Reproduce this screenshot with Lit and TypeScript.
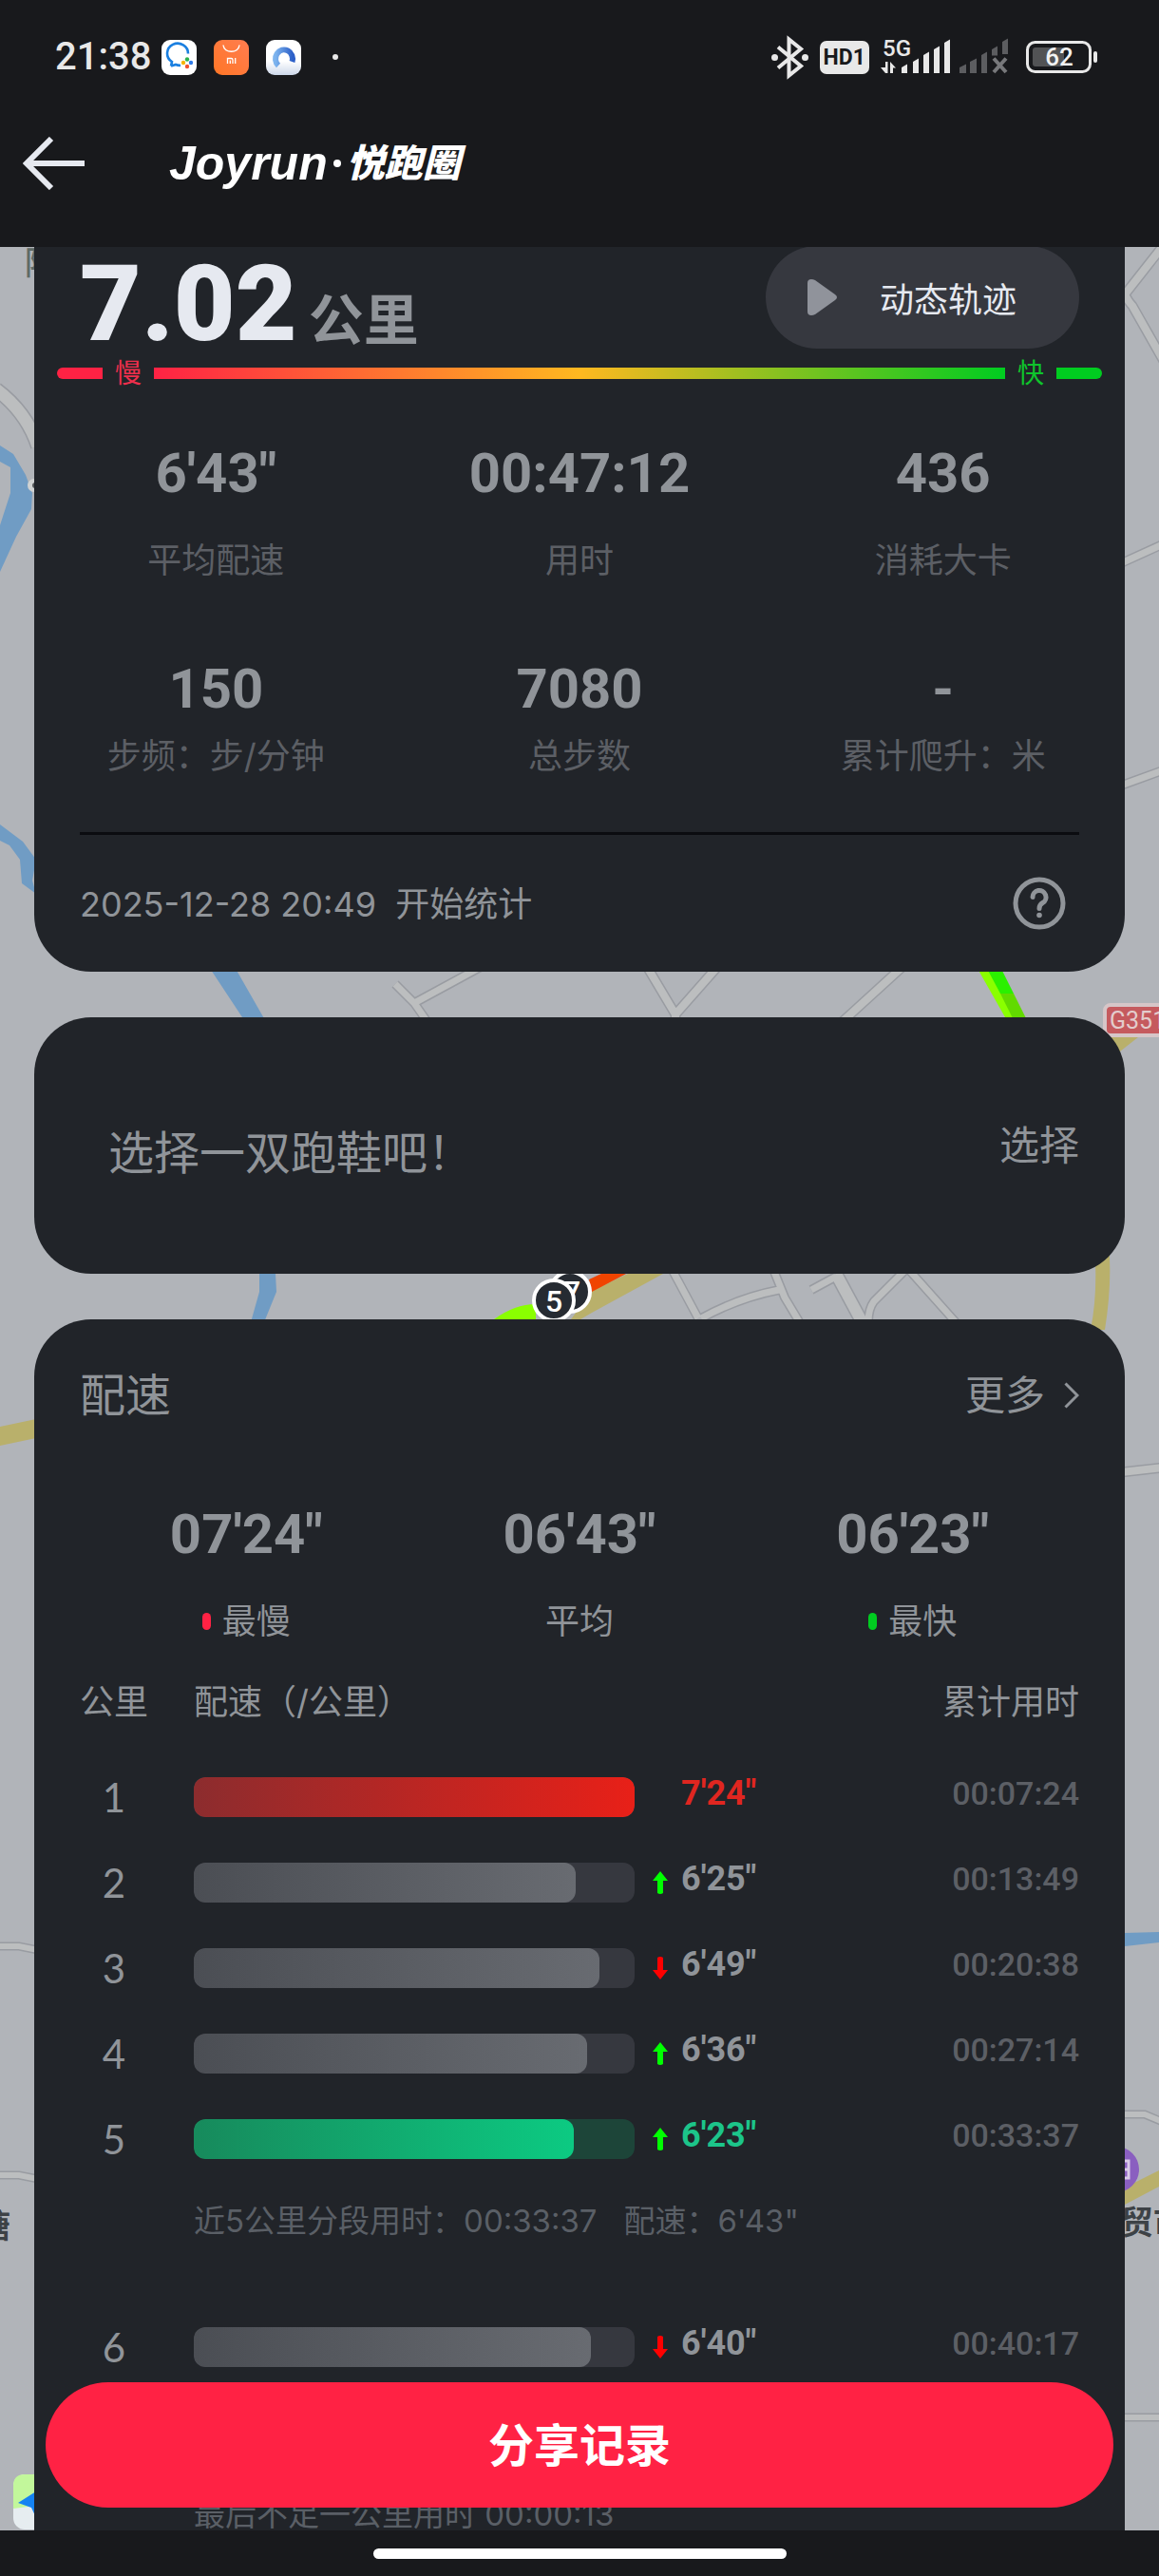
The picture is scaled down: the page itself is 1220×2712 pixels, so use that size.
import { LitElement, html, svg, css, nothing } from 'lit';
import { customElement, property } from 'lit/decorators.js';
import { classMap } from 'lit/directives/class-map.js';

interface Split {
  km: number;
  seconds: number;
  total: string;
  trend?: 'up' | 'down';
  mark?: 'slowest' | 'fastest';
  note?: string;
}

const SPLITS: Split[] = [
  { km: 1, seconds: 444, total: '00:07:24', mark: 'slowest' },
  { km: 2, seconds: 385, total: '00:13:49', trend: 'up' },
  { km: 3, seconds: 409, total: '00:20:38', trend: 'down' },
  { km: 4, seconds: 396, total: '00:27:14', trend: 'up' },
  {
    km: 5,
    seconds: 383,
    total: '00:33:37',
    trend: 'up',
    mark: 'fastest',
    note: '近5公里分段用时：00:33:37   配速：6\'43"',
  },
  { km: 6, seconds: 400, total: '00:40:17', trend: 'down' },
];

const STATS = [
  { value: '6\'43"', label: '平均配速' },
  { value: '00:47:12', label: '用时' },
  { value: '436', label: '消耗大卡' },
];

const STATS_MORE = [
  { value: '150', label: '步频：步/分钟' },
  { value: '7080', label: '总步数' },
  { value: '-', label: '累计爬升：米' },
];

const PACES = [
  { value: '07\'24"', label: '最慢', dot: 'slow' },
  { value: '06\'43"', label: '平均', dot: '' },
  { value: '06\'23"', label: '最快', dot: 'fast' },
];

const slowest = Math.max(...SPLITS.map((s) => s.seconds));

const formatPace = (seconds: number) =>
  `${Math.floor(seconds / 60)}'${String(seconds % 60).padStart(2, '0')}"`;

@customElement('status-bar')
export class StatusBar extends LitElement {
  static styles = css`
    :host {
      display: flex;
      align-items: center;
      justify-content: space-between;
      height: 120px;
      padding: 0 64px 0 58px;
      color: #e8e8e8;
      font-family: Roboto, 'Noto Sans', sans-serif;
    }
    .left,
    .right {
      display: flex;
      align-items: center;
    }
    .left {
      gap: 18px;
    }
    .right {
      gap: 12px;
    }
    time {
      width: 94px;
      font-size: 40px;
      font-weight: 500;
      line-height: 48px;
      white-space: nowrap;
    }
    .dot {
      width: 6px;
      height: 6px;
      margin-left: 15px;
      border-radius: 50%;
      background: #e8e8e8;
    }
    .hd {
      padding: 0 4px;
      border-radius: 7px;
      background: #e8e8e8;
      color: #18191c;
      font-size: 23px;
      font-weight: 700;
      line-height: 35px;
    }
    svg {
      display: block;
      overflow: visible;
    }
    .battery {
      margin-left: 7px;
    }
    svg text {
      font-family: Roboto, 'Noto Sans', sans-serif;
    }
  `;

  render() {
    return html`
      <div class="left">
        <time>21:38</time>
        <svg width="37" height="37" viewBox="0 0 37 37">
          <rect width="37" height="37" rx="9" fill="#fff" />
          <path
            d="M10 27.5l1-4.5a11 10.500 0 1 1 17-8.500M10 27.500l5-1.500a11 11 0 0 0 5 .8"
            fill="none"
            stroke="#1a7fe0"
            stroke-width="2.600"
          />
          <circle cx="27" cy="20.500" r="2.200" fill="#2bb24c" />
          <circle cx="23" cy="24" r="2.200" fill="#f5b400" />
          <circle cx="31" cy="24" r="2.200" fill="#2f7be8" />
          <circle cx="27" cy="28" r="2.200" fill="#f0502e" />
        </svg>
        <svg width="37" height="37" viewBox="0 0 37 37">
          <defs>
            <linearGradient id="mi" x1="0" y1="1" x2="1" y2="0">
              <stop offset="0" stop-color="#ff7626" />
              <stop offset="1" stop-color="#ff7d50" />
            </linearGradient>
          </defs>
          <rect width="37" height="37" rx="9" fill="url(#mi)" />
          <path d="M10 5.500c1 9 16 9 17 0" fill="none" stroke="#fff" stroke-width="1.500" />
          <path
            d="M14.500 25v-5.500h4a1.500 1.500 0 0 1 1.500 1.500v4M17.300 21.500v3.500M22.700 19v6"
            fill="none"
            stroke="#fff"
            stroke-width="1.300"
          />
        </svg>
        <svg width="37" height="37" viewBox="0 0 37 37">
          <defs>
            <linearGradient id="sky" x1="0" y1="0" x2="0" y2="1">
              <stop offset=".6" stop-color="#fff" />
              <stop offset="1" stop-color="#cdd8ea" />
            </linearGradient>
            <linearGradient id="ring" x1="0" y1="0" x2="1" y2="0">
              <stop offset="0" stop-color="#7db4ee" />
              <stop offset="1" stop-color="#2c5fc8" />
            </linearGradient>
          </defs>
          <rect width="37" height="37" rx="9" fill="url(#sky)" />
          <path
            d="M13 27a9 9.500 0 1 1 14.500-4"
            fill="none"
            stroke="url(#ring)"
            stroke-width="6"
          />
        </svg>
        <span class="dot"></span>
      </div>
      <div class="right">
        <svg width="39" height="43" viewBox="0 0 39 43" fill="none" stroke="#e8e8e8">
          <path d="M7 10.500L31 30.500L18.500 40.500V2.500L31 12.500L7 32.500" stroke-width="4" />
          <circle cx="3.500" cy="21.500" r="3.500" fill="#e8e8e8" stroke="none" />
          <circle cx="35.500" cy="21.500" r="3.500" fill="#e8e8e8" stroke="none" />
        </svg>
        <span class="hd">HD1</span>
        <svg width="134" height="38" viewBox="0 0 134 38" fill="#e8e8e8">
          <text x="2" y="18" font-size="24" font-weight="500">5G</text>
          <path d="M5 24h2.500v12H5l-5-6h5zM10 36V24l6 6.500h-3V36z" />
          <path
            d="M22 30l6-3.500v9.500h-6zM34 24l6-3.500V36h-6zM45 17l6-3.500V36h-6zM56 11l6-3.500V36h-6zM67 4l6-3.500V36h-6z"
          />
          <path
            fill="#5c5d60"
            d="M83 30l7-3.500v9.500h-7zM94 24l7-3.500V36h-7zM106 17l6-3.500V36h-6zM117 11l6-3.500v10h-6zM128 3l6-3.500V16h-6z"
          />
          <path d="M119 20.500l13 14.500M132 20.500l-13 14.500" stroke="#77787b" stroke-width="4" />
        </svg>
        <svg class="battery" width="76" height="35" viewBox="0 0 76 35">
          <rect x="1.500" y="1.500" width="66" height="31" rx="8" fill="none" stroke="#e8e8e8" stroke-width="3" />
          <rect x="7" y="7" width="33" height="20" rx="3" fill="#525355" />
          <rect x="71" y="11" width="4" height="12" rx="2" fill="#e8e8e8" />
          <text x="35" y="26" text-anchor="middle" font-size="26" font-weight="500" fill="#f2f2f2">62</text>
        </svg>
      </div>
    `;
  }
}

@customElement('route-map')
export class RouteMap extends LitElement {
  static styles = css`
    :host {
      display: block;
    }
    svg {
      display: block;
      width: 100%;
      height: 100%;
    }
    .edge {
      fill: none;
      stroke: #999ca2;
    }
    .road {
      fill: none;
      stroke: #bcbebf;
    }
    .water {
      fill: #709cc4;
    }
    .main {
      fill: #b9b06b;
    }
    text {
      font-family: 'Noto Sans', 'Noto Sans CJK SC', sans-serif;
      font-weight: 700;
      font-size: 34px;
      fill: #3d4246;
    }
    .district {
      font-weight: 500;
      fill: #5f6a66;
    }
    .shield {
      font-family: Roboto, sans-serif;
      font-weight: 400;
      font-size: 25px;
      fill: #e3cccc;
    }
    .marker {
      font-family: Roboto, sans-serif;
      font-weight: 500;
      font-size: 32px;
      fill: #fff;
      text-anchor: middle;
    }
  `;

  // Every road is stroked twice: a darker casing first, the surface over it.
  private roads = [
    { d: 'M-4 410Q28 434 40 470', w: 13 },
    { d: 'M416 1036l20 20 14 20M436 1056l70-38', w: 7 },
    { d: 'M680 1016l31 52 44-50M711 1068v8M952 1016l-68 62', w: 8 },
    { d: 'M1228 254l-44 56q4 8 8 12l34 60', w: 8 },
    { d: 'M1180 593l44-20M1180 827l44-16', w: 7 },
    { d: 'M706 1334l29 54M738 1388q40-22 82-30M813 1334l13 32 18 30', w: 7 },
    { d: 'M854 1358l26-14M954 1336l-34 34q-6 8-6 22M956 1336l50 56', w: 7 },
    { d: 'M880 1341l28 52', w: 12 },
    { d: 'M1180 1550l44-5', w: 8 },
    { d: 'M-4 2049h24l20 4M-4 2290h24l20 4', w: 6 },
    { d: 'M1180 2226h25l19 8M1180 2545h44', w: 6 },
  ];

  render() {
    return html`
      <svg viewBox="0 260 1220 2404" preserveAspectRatio="xMidYMin slice" aria-hidden="true">
        <rect y="260" width="1220" height="2404" fill="#b1b4b9" />
        ${this.roads.map((r) => svg`<path class="edge" d=${r.d} stroke-width=${r.w + 3} />`)}
        ${this.roads.map((r) => svg`<path class="road" d=${r.d} stroke-width=${r.w} />`)}
        <path
          class="water"
          d="M0 469l14 9 13 22 7 19-1 17-16 29-17 37v-49l11-34v-27l-11-6zM0 868l24 18 14 19-4 22 4 14-15-11-2-25-11-15-10-5zM220 1018h27l32 56h-22zM273 1341h17l1 19-13 32h-14l9-32zM1184 2035l36-1v11l-36 4z"
        />
        <circle cx="36" cy="511" r="7" fill="#d0d2d2" />
        <circle cx="37" cy="511" r="3" fill="#55585a" />
        <path
          class="main"
          d="M0 1502l38-8v20l-38 8zM661 1341h37l-75 41-12 7h-10l22-30zM1152 1310q4 50-4 90h15q8-50 4-90zM1184 2303l36-18v17l-36 19zM1170 1114l28-22h-28z"
        />
        <path fill="#8aff00" d="M1028 1018h12l40 60h-18zM520 1389q22-16 44-16v16z" />
        <path fill="#2bf000" d="M1038 1018h15l14 28h-14z" />
        <path fill="#62da00" d="M1053 1046h14l14 28h-14z" />
        <path fill="#f04400" d="M620 1347l15-7h26l-38 20z" />
        <circle cx="600" cy="1360" r="21" fill="#262b32" stroke="#fff" stroke-width="4" />
        <text class="marker" x="602" y="1371">7</text>
        <circle cx="583" cy="1369" r="21" fill="#262b32" stroke="#fff" stroke-width="4" />
        <text class="marker" x="583" y="1381">5</text>
        <rect x="1163" y="1058" width="90" height="32" rx="6" fill="#c55a5e" stroke="#d6c6c8" stroke-width="4" />
        <text class="shield" x="1168" y="1083">G351</text>
        <text class="district" x="26" y="289">陈</text>
        <text x="11" y="2356" text-anchor="end">塘</text>
        <text x="1180" y="2352">贸市</text>
        <circle cx="1175" cy="2284" r="24" fill="#8a5fc0" />
        <path d="M1184 2275h4v18h-4M1184 2284h4" fill="none" stroke="#d9cbe8" stroke-width="3" />
        <rect x="14" y="2605" width="60" height="58" rx="12" fill="#e6edf0" />
        <path fill="#c2f79b" d="M14 2641v-24q0-12 12-12h20v32z" />
        <path fill="#1583f2" d="M19 2635l22-14v36l-8-17z" />
      </svg>
    `;
  }
}

@customElement('pace-table')
export class PaceTable extends LitElement {
  @property({ attribute: false }) splits: Split[] = [];

  static styles = css`
    :host {
      display: block;
    }
    table,
    thead,
    tbody {
      display: block;
    }
    tr {
      display: grid;
      grid-template-columns: 72px minmax(0, 512fr) 150px minmax(0, 318fr);
      align-items: center;
      height: 90px;
    }
    thead tr {
      height: 110px;
    }
    th,
    td {
      padding: 0;
      font-weight: 400;
      text-align: left;
    }
    th {
      color: #909499;
      font-size: 36px;
      line-height: 40px;
    }
    .wide {
      grid-column: span 2;
    }
    .wide,
    .bar {
      padding-left: 48px;
    }
    thead th:last-child,
    .total {
      text-align: right;
    }
    .km {
      color: #909499;
      font-family: Lato, 'Noto Sans', sans-serif;
      font-size: 42px;
      text-align: center;
    }
    .track {
      height: 42px;
      border-radius: 12px;
      background: #36383f;
      overflow: hidden;
    }
    .fill {
      height: 100%;
      border-radius: 12px;
      background: linear-gradient(90deg, #4b4e54, #686b71);
    }
    .slowest .fill {
      background: linear-gradient(90deg, #8c2c2e, #e82018);
    }
    .fastest .track {
      background: #1d4539;
    }
    .fastest .fill {
      background: linear-gradient(90deg, #178a5c, #0cca82);
    }
    .pace,
    .total {
      font-family: Roboto, 'Noto Sans', sans-serif;
      font-size: 34px;
      line-height: 44px;
      padding-bottom: 8px;
    }
    .pace {
      display: grid;
      grid-template-columns: 16px 1fr;
      align-items: center;
      gap: 14px;
      padding-left: 19px;
      color: #909499;
      font-size: 36px;
      font-weight: 700;
    }
    .pace svg {
      margin-top: 8px;
    }
    .pace span {
      grid-column: 2;
    }
    .slowest .pace {
      color: #e02620;
    }
    .fastest .pace {
      color: #1cc58a;
    }
    .total {
      color: #5c5f65;
      font-weight: 500;
    }
    .note {
      display: block;
      height: 129px;
    }
    .note td {
      display: block;
      padding: 21px 0 0 120px;
      color: #5a5f66;
      font-size: 33px;
      line-height: 40px;
      white-space: pre;
    }
    .last {
      padding-top: 90px;
    }
  `;

  private arrow(trend: Split['trend']) {
    if (!trend) return nothing;
    return html`
      <svg width="16" height="24" viewBox="0 0 16 24" aria-hidden="true">
        ${trend === 'up'
          ? svg`<path d="M8 0l8 10h-5v13q-3 2-6 0V10H0z" fill="#00ff00" />`
          : svg`<path d="M8 24l8-10h-5V1Q8-1 5 1v13H0z" fill="#ff0000" />`}
      </svg>
    `;
  }

  private row(split: Split) {
    const width = ((split.seconds / slowest) * 100).toFixed(1);
    return html`
      <tr class=${classMap({ slowest: split.mark === 'slowest', fastest: split.mark === 'fastest' })}>
        <td class="km">${split.km}</td>
        <td class="bar">
          <div class="track"><div class="fill" style="width: ${width}%"></div></div>
        </td>
        <td class="pace">${this.arrow(split.trend)}<span>${formatPace(split.seconds)}</span></td>
        <td class="total">${split.total}</td>
      </tr>
      ${split.note ? html`<tr class="note"><td colspan="4">${split.note}</td></tr>` : nothing}
    `;
  }

  render() {
    return html`
      <table>
        <thead>
          <tr>
            <th>公里</th>
            <th class="wide">配速（/公里）</th>
            <th>累计用时</th>
          </tr>
        </thead>
        <tbody>
          ${this.splits.map((s) => this.row(s))}
          <tr class="note last"><td colspan="4">最后不足一公里用时 00:00:13</td></tr>
        </tbody>
      </table>
    `;
  }
}

@customElement('app-root')
export class AppRoot extends LitElement {
  static styles = css`
    :host {
      display: flex;
      flex-direction: column;
      height: 100vh;
      background: #18191c;
      color: #909499;
      font-family: Inter, 'Noto Sans CJK SC', sans-serif;
      overflow: hidden;
    }
    button {
      padding: 0;
      border: 0;
      background: none;
      color: inherit;
      font: inherit;
      cursor: pointer;
    }
    svg {
      display: block;
    }
    .nav {
      display: flex;
      align-items: center;
      gap: 88px;
      height: 104px;
      padding: 0 24px 36px;
    }
    .brand {
      display: flex;
      align-items: center;
      gap: 6px;
      margin: 0;
      color: #fff;
      font-family: 'Liberation Sans', 'Noto Sans CJK SC', sans-serif;
      font-size: 50px;
      font-style: italic;
      font-weight: 700;
      line-height: 60px;
    }
    .brand i {
      width: 8px;
      height: 8px;
      border-radius: 50%;
      background: #fff;
    }
    .brand span {
      font-size: 40px;
      font-weight: 900;
    }
    main {
      position: relative;
      flex: 1;
      min-height: 0;
      overflow: hidden;
    }
    route-map {
      position: absolute;
      inset: 0;
    }
    .feed {
      position: relative;
      display: flex;
      flex-direction: column;
      gap: 48px;
      padding: 0 36px;
    }
    .card {
      padding: 0 48px;
      border-radius: 60px;
      background: #212429;
    }
    .summary {
      border-radius: 0 0 60px 60px;
    }
    .hero {
      display: flex;
      align-items: flex-end;
      justify-content: space-between;
      height: 107px;
    }
    .distance {
      display: flex;
      align-items: baseline;
      gap: 12px;
      margin: 0;
      font-size: 58px;
      font-weight: 700;
      line-height: 60px;
    }
    .distance b {
      color: #e6e9f0;
      font-family: Roboto, 'Noto Sans', sans-serif;
      font-size: 112px;
      line-height: 88px;
    }
    .replay {
      display: flex;
      align-items: center;
      justify-content: space-between;
      width: 330px;
      height: 108px;
      padding: 0 66px 0 44px;
      border-radius: 54px;
      background: #36383f;
      color: #e6e9f0;
      font-size: 36px;
    }
    .scale {
      display: flex;
      align-items: center;
      gap: 13px;
      margin: 6px -24px 0;
      font-size: 28px;
      line-height: 40px;
    }
    .scale i {
      width: 48px;
      height: 12px;
    }
    .scale .start {
      border-radius: 6px 0 0 6px;
      background: #ff2244;
    }
    .scale .middle {
      flex: 1;
      background: linear-gradient(90deg, #ff2244, #ffb820 50%, #00cc20);
    }
    .scale .end {
      border-radius: 0 6px 6px 0;
      background: #00cc20;
    }
    .slow-text {
      color: #ee2f4c;
    }
    .fast-text {
      color: #0fc42c;
    }
    .stats {
      display: grid;
      grid-template-columns: repeat(3, 1fr);
      margin: 53px -48px 0;
      text-align: center;
    }
    .stats.tight {
      margin-top: 83px;
    }
    .stats div,
    .paces div {
      display: flex;
      flex-direction: column;
      gap: 40px;
    }
    .stats.tight div {
      gap: 19px;
    }
    dl {
      margin: 0;
    }
    dt {
      order: 2;
      color: #5c5f65;
      font-size: 36px;
      line-height: 40px;
    }
    dd {
      margin: 0;
      font-family: Roboto, 'Noto Sans', sans-serif;
      font-size: 58px;
      font-weight: 700;
      line-height: 64px;
    }
    .started {
      display: flex;
      align-items: center;
      justify-content: space-between;
      height: 144px;
      margin-top: 60px;
      padding-right: 14px;
      border-top: 3px solid #0b0c10;
      font-size: 36px;
    }
    .started span {
      padding-bottom: 4px;
      white-space: pre;
    }
    .shoes {
      display: flex;
      align-items: center;
      justify-content: space-between;
      height: 262px;
      padding-bottom: 8px;
      font-size: 42px;
    }
    .shoes p {
      margin: 16px 0 0 30px;
      font-size: 48px;
    }
    .pace-head {
      display: flex;
      align-items: center;
      justify-content: space-between;
      padding-top: 50px;
    }
    h2 {
      margin: 0;
      font-size: 48px;
      font-weight: 400;
      line-height: 60px;
    }
    .more {
      display: flex;
      align-items: center;
      gap: 20px;
      font-size: 42px;
      line-height: 60px;
    }
    .paces {
      display: grid;
      grid-template-columns: repeat(3, 1fr);
      margin-top: 84px;
      padding-bottom: 10px;
      text-align: center;
    }
    .paces dt {
      display: flex;
      align-items: center;
      justify-content: center;
      gap: 12px;
      color: #909499;
    }
    .dot {
      width: 9px;
      height: 18px;
      border-radius: 5px;
    }
    .dot.slow {
      background: #ff2244;
    }
    .dot.fast {
      background: #00cc20;
    }
    .share {
      position: absolute;
      inset: auto 48px 24px;
      height: 132px;
      padding-bottom: 6px;
      border-radius: 66px;
      background: #ff2244;
      color: #fff;
      font-size: 48px;
      font-weight: 700;
    }
    footer {
      display: flex;
      justify-content: center;
      height: 29px;
      padding-top: 19px;
    }
    .home {
      width: 435px;
      height: 11px;
      border-radius: 6px;
      background: #fff;
    }
  `;

  private stats(items: typeof STATS, tight = false) {
    return html`
      <dl class=${classMap({ stats: true, tight })}>
        ${items.map((s) => html`<div><dt>${s.label}</dt><dd>${s.value}</dd></div>`)}
      </dl>
    `;
  }

  render() {
    return html`
      <header>
        <status-bar></status-bar>
        <div class="nav">
          <button aria-label="返回">
            <svg width="66" height="56" viewBox="0 0 66 56" fill="none" stroke="#e6e9f0" stroke-width="6">
              <path d="M65 28H4M30 2L4 28l26 26" />
            </svg>
          </button>
          <h1 class="brand">Joyrun<i></i><span>悦跑圈</span></h1>
        </div>
      </header>
      <main>
        <route-map></route-map>
        <div class="feed">
          <section class="card summary">
            <div class="hero">
              <p class="distance"><b>7.02</b>公里</p>
              <button class="replay">
                <svg width="31" height="38" viewBox="0 0 31 38" fill="#90939b" aria-hidden="true">
                  <path d="M0 4q0-4 4-4 2 0 4 1l21 15q4 3 0 6L8 37q-2 1-4 1-4 0-4-4z" />
                </svg>
                动态轨迹
              </button>
            </div>
            <div class="scale">
              <i class="start"></i><span class="slow-text">慢</span>
              <i class="middle"></i><span class="fast-text">快</span><i class="end"></i>
            </div>
            ${this.stats(STATS)} ${this.stats(STATS_MORE, true)}
            <div class="started">
              <span>2025-12-28 20:49  开始统计</span>
              <button aria-label="说明">
                <svg width="56" height="56" viewBox="0 0 56 56" fill="none" stroke="#909499" stroke-width="5">
                  <circle cx="28" cy="28" r="25" />
                  <path d="M21 21.500a7 7 0 1 1 10.500 6q-3.500 2-3.500 6" stroke-linecap="round" />
                  <circle cx="28" cy="40.500" r="2.800" fill="#909499" stroke="none" />
                </svg>
              </button>
            </div>
          </section>
          <section class="card shoes">
            <p>选择一双跑鞋吧！</p>
            <button>选择</button>
          </section>
          <section class="card">
            <div class="pace-head">
              <h2>配速</h2>
              <button class="more">
                更多
                <svg width="16" height="28" viewBox="0 0 16 28" fill="none" stroke="#909499" stroke-width="3">
                  <path d="M1.500 1.500L14 14 1.500 26.500" />
                </svg>
              </button>
            </div>
            <dl class="paces">
              ${PACES.map(
                (p) => html`
                  <div>
                    <dt>${p.dot ? html`<i class="dot ${p.dot}"></i>` : nothing}${p.label}</dt>
                    <dd>${p.value}</dd>
                  </div>
                `
              )}
            </dl>
            <pace-table .splits=${SPLITS}></pace-table>
          </section>
        </div>
        <button class="share">分享记录</button>
      </main>
      <footer><div class="home"></div></footer>
    `;
  }
}
